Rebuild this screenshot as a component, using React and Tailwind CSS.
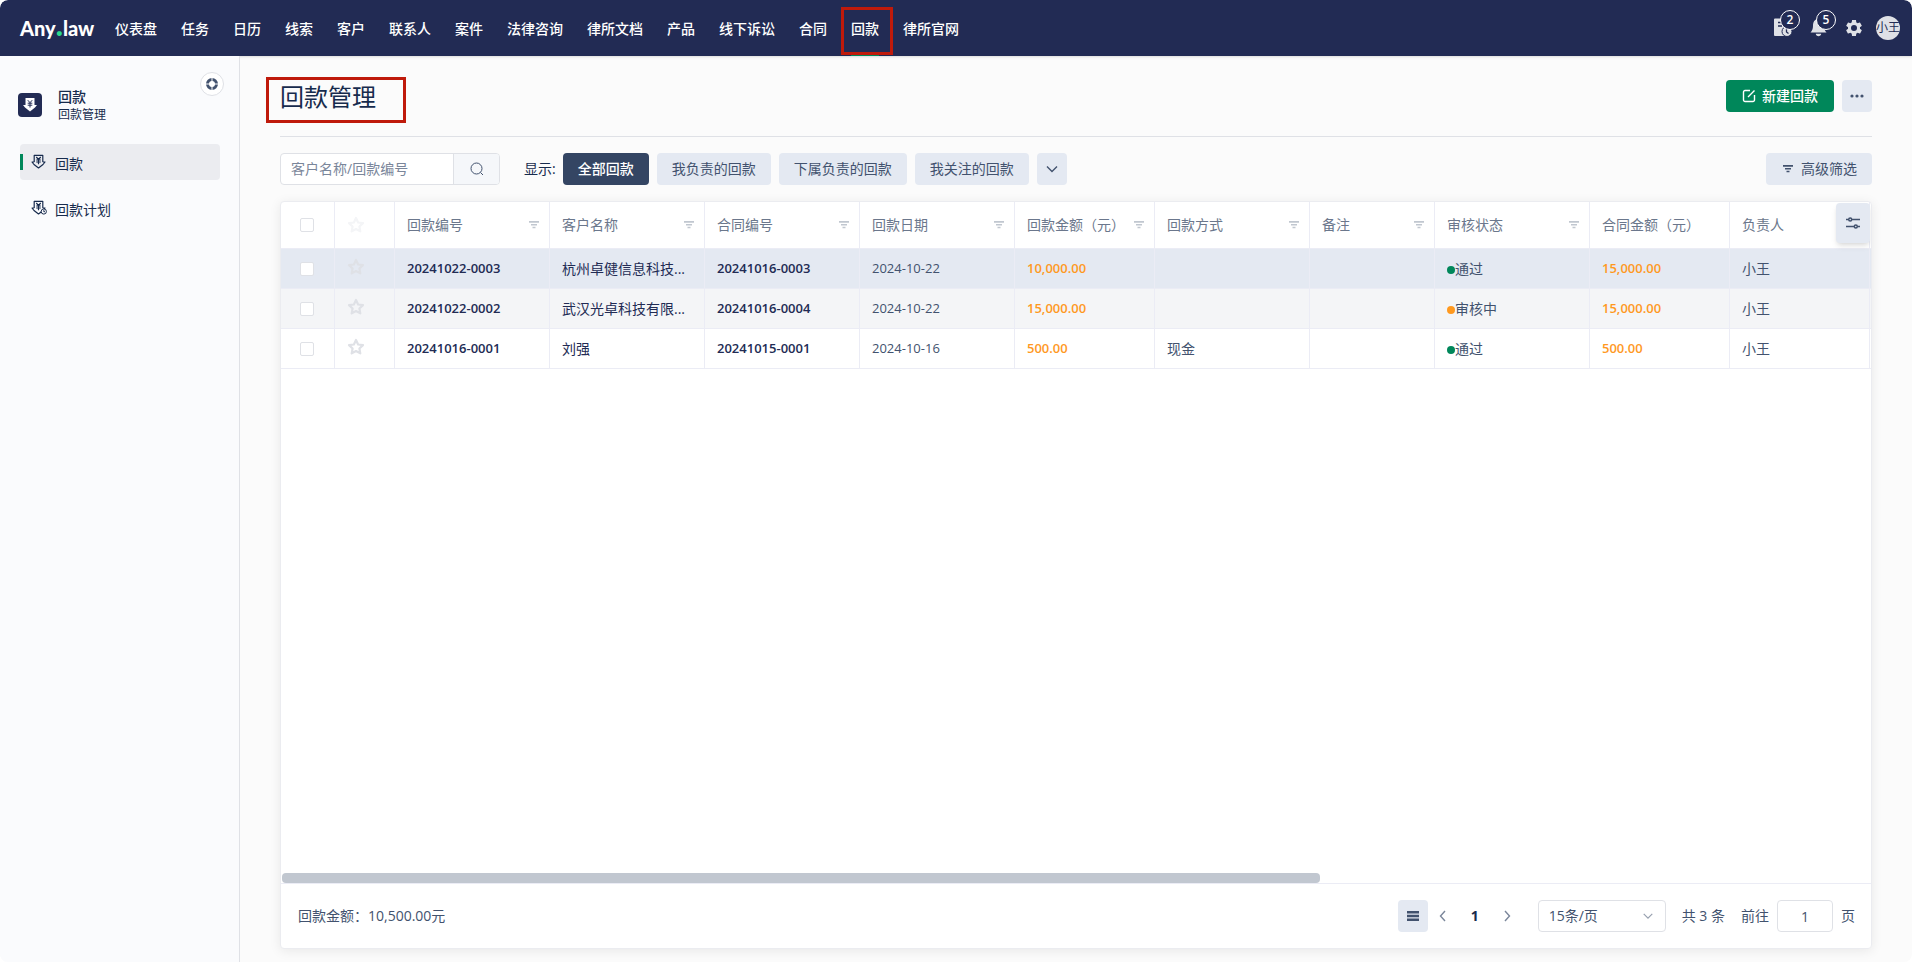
import { useState } from "react";

const navItems = ["仪表盘", "任务", "日历", "线索", "客户", "联系人", "案件", "法律咨询", "律所文档", "产品", "线下诉讼", "合同", "回款", "律所官网"];

const columns = [
  { key: "no", label: "回款编号", filter: true, width: "w-[155px]" },
  { key: "customer", label: "客户名称", filter: true, width: "w-[155px]" },
  { key: "contract", label: "合同编号", filter: true, width: "w-[155px]" },
  { key: "date", label: "回款日期", filter: true, width: "w-[155px]" },
  { key: "amount", label: "回款金额（元）", filter: true, width: "w-[140px]" },
  { key: "method", label: "回款方式", filter: true, width: "w-[155px]" },
  { key: "remark", label: "备注", filter: true, width: "w-[125px]" },
  { key: "status", label: "审核状态", filter: true, width: "w-[155px]" },
  { key: "total", label: "合同金额（元）", filter: false, width: "w-[140px]" },
  { key: "owner", label: "负责人", filter: false, width: "w-[140px]" },
];

const rows = [
  { no: "20241022-0003", customer: "杭州卓健信息科技...", contract: "20241016-0003", date: "2024-10-22", amount: "10,000.00", method: "", remark: "", status: "通过", total: "15,000.00", owner: "小王", bg: "bg-[#e4e9f2]" },
  { no: "20241022-0002", customer: "武汉光卓科技有限...", contract: "20241016-0004", date: "2024-10-22", amount: "15,000.00", method: "", remark: "", status: "审核中", total: "15,000.00", owner: "小王", bg: "bg-[#f4f5f7]" },
  { no: "20241016-0001", customer: "刘强", contract: "20241015-0001", date: "2024-10-16", amount: "500.00", method: "现金", remark: "", status: "通过", total: "500.00", owner: "小王", bg: "bg-white" },
];

const cellStyle = {
  no: "text-[13px] font-semibold text-[#222b54]",
  customer: "text-sm text-[#222b54]",
  contract: "text-[13px] font-semibold text-[#222b54]",
  date: "text-[13px] font-medium text-[#42526e]",
  amount: "text-[13px] font-semibold text-[#ff991f]",
  method: "text-sm text-[#42526e]",
  remark: "text-sm text-[#42526e]",
  status: "text-sm text-[#42526e]",
  total: "text-[13px] font-semibold text-[#ff991f]",
  owner: "text-sm text-[#42526e]",
};

const FilterIcon = ({ className }) => (
  <svg className={className} width="10" height="8" viewBox="0 0 10 8" fill="currentColor">
    <path d="M0 0h10v1.700H0zM2 3h6v1.600H2zM3.500 5.700h3v1.500h-3z" />
  </svg>
);

const StarIcon = ({ className }) => (
  <svg className={className} width="18" height="18" viewBox="0 0 18 18" fill="none" stroke="currentColor" strokeWidth="2.2" strokeLinejoin="round">
    <path d="M9 2l2.100 4.500 4.900.6-3.600 3.400.9 4.900L9 13l-4.300 2.400.9-4.900L2 7.100l4.900-.6z" />
  </svg>
);

const Chevron = ({ d, className, size = 14 }) => (
  <svg className={className} width={size} height={size} viewBox="0 0 14 14" fill="none" stroke="currentColor" strokeWidth="1.4">
    <path d={d} />
  </svg>
);

// downward arrow with the yuan sign
const PaymentIcon = ({ clock }) => (
  <svg width="16" height="16" viewBox="0 0 16 16" fill="none" stroke="currentColor" strokeWidth="1.2" strokeLinejoin="round">
    <path d="M3.200 8V1.300h8.600V8M3.200 8H1l2 2.500 4.500 3.400 4.500-3.400L14 8h-2.200" />
    <path d="M5.300 3l2.200 2.500L9.700 3M7.500 5.500v4.800M5.200 6h4.600M5.200 8h4.600" />
    {clock && (
      <g strokeWidth="1">
        <circle cx="12.800" cy="11.500" r="2.600" fill="#fafbfd" />
        <path d="M12.800 10.200v1.500h1.200" />
      </g>
    )}
  </svg>
);

const Badge = ({ children }) => (
  <span className="absolute -top-2 left-[6px] flex h-5 w-5 items-center justify-center rounded-full border border-white bg-[#222b54] text-xs font-semibold text-white">
    {children}
  </span>
);

const Header = () => (
  <header className="flex h-14 items-center rounded-t-lg bg-[#222b54] pr-3 pl-5 text-white shadow-sm">
    <a href="#" className="w-[75px] font-['Lato',sans-serif] text-xl leading-7 font-black whitespace-nowrap">
      Any<span className="text-3xl leading-5 text-[#2bd98c]">.</span>law
    </a>
    <nav className="ml-5 flex h-full gap-6 text-sm">
      {navItems.map((item) => (
        <a
          key={item}
          href="#"
          className={item === "回款" ? "relative flex items-center border-b border-[#00875a] pt-0.5 font-medium" : "flex items-center pt-0.5 font-medium"}
        >
          {item}
          {item === "回款" && <span className="absolute top-[7px] -right-[14px] -left-[10px] h-12 border-3 border-[#bf1a0b]" />}
        </a>
      ))}
    </nav>
    <div className="ml-auto flex items-center gap-4 text-[#dfe1e6]">
      <button aria-label="待办" className="relative">
        <svg width="20" height="20" viewBox="0 0 20 20" fill="currentColor">
          <path d="M1 .5h13V18H1a1 1 0 0 1-1-1V1.500a1 1 0 0 1 1-1z" />
          <path d="M4 4.500h6M4 8h4" stroke="#222b54" strokeWidth="1.500" />
          <circle cx="13" cy="13.500" r="5" stroke="#222b54" strokeWidth="1" />
          <path d="M12.500 10.500v3.500l2 1.500" fill="none" stroke="#222b54" strokeWidth="1.300" />
        </svg>
        <Badge>2</Badge>
      </button>
      <button aria-label="通知" className="relative">
        <svg width="18" height="20" viewBox="0 0 18 20" fill="currentColor">
          <path d="M8.500 1c4 0 5.500 3 5.500 7 0 3 1 5 2.500 6.500H.5C2 13 3 11 3 8c0-4 1.500-7 5.500-7zM5.800 15.800h5.400c0 3.200-5.400 3.200-5.400 0z" />
        </svg>
        <Badge>5</Badge>
      </button>
      <button aria-label="设置" className="-mr-1">
        <svg width="20" height="20" viewBox="0 0 24 24" fill="currentColor">
          <path d="M19.140 12.940c.04-.3.06-.61.06-.94 0-.32-.02-.64-.07-.94l2.030-1.580c.18-.14.23-.41.12-.61l-1.920-3.320c-.12-.22-.37-.29-.59-.22l-2.390.96c-.5-.38-1.030-.7-1.620-.94l-.36-2.540c-.04-.24-.24-.41-.48-.41h-3.840c-.24 0-.43.17-.47.41l-.36 2.540c-.59.24-1.130.57-1.620.94l-2.390-.96c-.22-.08-.47 0-.59.22L2.740 8.870c-.12.21-.08.47.12.61l2.030 1.580c-.05.3-.09.63-.09.94s.02.64.07.94l-2.030 1.580c-.18.14-.23.41-.12.61l1.920 3.320c.12.22.37.29.59.22l2.390-.96c.5.38 1.030.7 1.620.94l.36 2.540c.05.24.24.41.48.41h3.840c.24 0 .44-.17.47-.41l.36-2.540c.59-.24 1.130-.56 1.620-.94l2.390.96c.22.08.47 0 .59-.22l1.920-3.320c.12-.22.07-.47-.12-.61l-2.010-1.580zM12 15.600A3.600 3.600 0 1 1 12 8.400a3.600 3.600 0 0 1 0 7.200z" />
        </svg>
      </button>
      <button className="flex h-6 w-6 items-center justify-center rounded-full bg-[#dfe1e6] text-xs whitespace-nowrap text-[#222b54]">小王</button>
    </div>
  </header>
);

const Sidebar = () => (
  <aside className="w-60 shrink-0 border-r border-[#dfe1e6] bg-[#fafbfd] pt-4">
    <div className="flex justify-end pr-[15px]">
      <button aria-label="收起" className="flex h-6 w-6 items-center justify-center rounded-full border border-[#dfe1e6] bg-white text-[#42526e]">
        <svg width="12" height="12" viewBox="0 0 12 12" fill="none" stroke="currentColor" strokeWidth="3">
          <circle cx="6" cy="6" r="4.500" />
          <path d="M6 0v4M6 8v4M0 6h4M8 6h4" stroke="white" strokeWidth="1" />
        </svg>
      </button>
    </div>
    <div className="-mt-[9px] flex items-center gap-4 pl-[18px]">
      <span className="flex h-6 w-6 items-center justify-center rounded bg-[#222b54]">
        <svg width="16" height="16" viewBox="0 0 16 16" fill="white">
          <path d="M3.500 1h9v7H15l-2 2.500L8 14.500l-5-4L1 8h2.500z" />
          <path d="M5.800 3.200L8 5.700l2.200-2.500M8 5.700v4.800M5.700 6.200h4.600M5.700 8.200h4.600" fill="none" stroke="#222b54" />
        </svg>
      </span>
      <div className="text-[#172b4d]">
        <div className="text-sm leading-5 font-medium">回款</div>
        <div className="text-xs leading-4">回款管理</div>
      </div>
    </div>
    <nav className="mt-[21px] space-y-[10px] pr-[19px] pl-5 text-sm text-[#172b4d]">
      <a href="#" className="relative flex h-9 items-center gap-2 rounded bg-[#ebecf0] pl-[11px]">
        <span className="absolute top-[10px] left-0 h-4 w-[3px] bg-[#00875a]" />
        <PaymentIcon />
        <span className="pt-[3px]">回款</span>
      </a>
      <a href="#" className="flex h-9 items-center gap-2 pl-[11px]">
        <PaymentIcon clock />
        <span className="pt-[3px]">回款计划</span>
      </a>
    </nav>
  </aside>
);

const Toolbar = () => (
  <div className="mt-4 flex h-8 items-center text-sm text-[#42526e]">
    <div className="flex h-8 w-[220px] overflow-hidden rounded border border-[#dfe1e6] bg-white">
      <input aria-label="搜索回款" placeholder="客户名称/回款编号" className="w-[172px] min-w-0 px-[10px] outline-none placeholder:text-[#7a869a]" />
      <button aria-label="搜索" className="flex flex-1 items-center justify-center border-l border-[#dfe1e6] bg-[#f5f7fa]">
        <svg width="14" height="14" viewBox="0 0 14 14" fill="none" stroke="currentColor">
          <circle cx="6.500" cy="6.500" r="5.500" />
          <path d="M10.500 10.500l2.500 2.500" />
        </svg>
      </button>
    </div>
    <span className="ml-6 text-[#172b4d]">显示:</span>
    <div className="ml-[7px] flex gap-2">
      <button className="h-8 rounded bg-[#344563] px-[15px] font-medium text-white">全部回款</button>
      <button className="h-8 rounded bg-[#e4e9f2] px-[15px]">我负责的回款</button>
      <button className="h-8 rounded bg-[#e4e9f2] px-[15px]">下属负责的回款</button>
      <button className="h-8 rounded bg-[#e4e9f2] px-[15px]">我关注的回款</button>
      <button aria-label="更多" className="flex h-8 w-[30px] items-center justify-center rounded bg-[#e4e9f2]">
        <Chevron d="M2 4.500l5 5 5-5" />
      </button>
    </div>
    <button className="ml-auto flex h-8 items-center gap-2 rounded bg-[#e4e9f2] pr-[15px] pl-[17px]">
      <FilterIcon />
      高级筛选
    </button>
  </div>
);

const Table = () => {
  const [checked, setChecked] = useState([]);
  const toggle = (no) => setChecked(checked.includes(no) ? checked.filter((n) => n !== no) : [...checked, no]);
  const box = "block h-[14px] w-[14px] appearance-none rounded-[2px] border border-[#dfe1e6] bg-white checked:bg-[#00875a]";
  return (
    <div className="relative flex-1 overflow-hidden">
      <table className="w-[1590px] table-fixed border-separate border-spacing-0 text-left">
        <thead>
          <tr className="h-[47px] text-sm text-[#6b778c]">
            <th className="w-[54px] border-r border-b border-[#ebecf5] pl-[19px]">
              <input type="checkbox" aria-label="全选" className={box} />
            </th>
            <th className="w-[60px] border-r border-b border-[#ebecf5] pl-3">
              <StarIcon className="text-[#f4f5f7]" />
            </th>
            {columns.map((c) => (
              <th key={c.key} className={`${c.width} border-r border-b border-[#ebecf5] pr-[10px] pl-3 font-normal`}>
                <div className="flex items-center justify-between whitespace-nowrap">
                  {c.label}
                  {c.filter && <FilterIcon className="text-[#c1c7d0]" />}
                </div>
              </th>
            ))}
            <th className="border-b border-[#ebecf5]" />
          </tr>
        </thead>
        <tbody>
          {rows.map((row) => (
            <tr key={row.no} className={`h-10 ${row.bg}`}>
              <td className="border-r border-b border-[#ebecf5] pl-[19px]">
                <input type="checkbox" aria-label={row.no} checked={checked.includes(row.no)} onChange={() => toggle(row.no)} className={box} />
              </td>
              <td className="border-r border-b border-[#ebecf5] pb-[3px] pl-3">
                <StarIcon className="text-[#dfe1e6]" />
              </td>
              {columns.map((c) => (
                <td key={c.key} className={`truncate border-r border-b border-[#ebecf5] pl-3 ${cellStyle[c.key]}`}>
                  {c.key === "status" && (
                    <span className={`inline-block h-2 w-2 rounded-full ${row.status === "通过" ? "bg-[#00875a]" : "bg-[#ff991f]"}`} />
                  )}
                  {row[c.key]}
                </td>
              ))}
              <td className="border-b border-[#ebecf5]" />
            </tr>
          ))}
        </tbody>
      </table>
      <button aria-label="列设置" className="absolute top-px right-px flex h-10 w-[34px] items-center justify-center rounded bg-[#e4e9f2] text-[#42526e] shadow-md">
        <svg width="14" height="12" viewBox="0 0 14 12" fill="none" stroke="currentColor" strokeWidth="1.500">
          <path d="M0 2.500h2.500M6 2.500h8M0 9.500h8M11.500 9.500H14" />
          <circle cx="4.200" cy="2.500" r="1.500" />
          <circle cx="9.800" cy="9.500" r="1.500" />
        </svg>
      </button>
    </div>
  );
};

const Footer = () => (
  <div className="flex h-[65px] items-center border-t border-[#ebecf5] pr-4 pl-[17px] text-sm text-[#42526e]">
    <span>回款金额：10,500.00元</span>
    <div className="ml-auto flex items-center">
      <button aria-label="列表" className="flex h-8 w-[30px] items-center justify-center rounded bg-[#e4e9f2]">
        <svg width="12" height="10" viewBox="0 0 12 10" fill="currentColor">
          <path d="M0 0h12v2.500H0zM0 3.800h12v2.400H0zM0 7.500h12V10H0z" />
        </svg>
      </button>
      <button aria-label="上一页" className="ml-2 text-[#7a869a]">
        <Chevron d="M9 2L4.500 7 9 12" />
      </button>
      <button className="w-[50px] font-bold text-[#172b4d]">1</button>
      <button aria-label="下一页" className="text-[#7a869a]">
        <Chevron d="M5 2l4.500 5L5 12" />
      </button>
      <div className="relative ml-6">
        <select aria-label="每页条数" className="h-8 w-32 appearance-none rounded border border-[#dfe1e6] bg-white px-[10px]">
          <option>15条/页</option>
        </select>
        <Chevron d="M2 4.500l5 5 5-5" size={12} className="absolute top-[10px] right-3 text-[#97a0af]" />
      </div>
      <span className="ml-4">共 3 条</span>
      <label className="ml-4 flex items-center gap-2">
        前往
        <input defaultValue="1" className="h-8 w-14 rounded border border-[#dfe1e6] text-center" />
        页
      </label>
    </div>
  </div>
);

export default function App() {
  return (
    <div className="flex min-h-screen flex-col overflow-hidden rounded-lg bg-[#fbfbfb] font-['Open_Sans','Noto_Sans_CJK_SC',sans-serif]">
      <Header />
      <div className="flex flex-1">
        <Sidebar />
        <main className="flex min-w-0 flex-1 flex-col px-10 pb-[13px]">
          <div className="flex h-[81px] items-center justify-between border-b border-[#dfe1e6]">
            <h1 className="relative mt-0.5 text-2xl text-[#172b4d]">
              回款管理
              <span className="absolute -top-1 -right-[30px] -left-[14px] h-[46px] border-3 border-[#bf1a0b]" />
            </h1>
            <div className="flex gap-2">
              <button className="flex h-8 items-center gap-[6px] rounded bg-[#00875a] px-4 text-sm font-medium text-white">
                <svg width="14" height="14" viewBox="0 0 14 14" fill="none" stroke="currentColor" strokeWidth="1.400">
                  <path d="M8 1.500H3A1.500 1.500 0 0 0 1.500 3v8A1.500 1.500 0 0 0 3 12.500h8a1.500 1.500 0 0 0 1.500-1.500V6M6 8l6.500-6.500" />
                </svg>
                新建回款
              </button>
              <button aria-label="更多操作" className="flex h-8 w-[30px] items-center justify-center rounded bg-[#e4e9f2] text-[#42526e]">
                <svg width="14" height="4" viewBox="0 0 14 4" fill="currentColor">
                  <circle cx="2" cy="2" r="1.600" />
                  <circle cx="7" cy="2" r="1.600" />
                  <circle cx="12" cy="2" r="1.600" />
                </svg>
              </button>
            </div>
          </div>
          <Toolbar />
          <section className="mt-4 flex flex-1 flex-col rounded border border-[#ebecf0] bg-white shadow-[0_2px_12px_rgba(0,0,0,0.08)]">
            <Table />
            <div className="ml-px h-[10px] w-[1038px] rounded bg-[#c1c7d0]" />
            <Footer />
          </section>
        </main>
      </div>
    </div>
  );
}
